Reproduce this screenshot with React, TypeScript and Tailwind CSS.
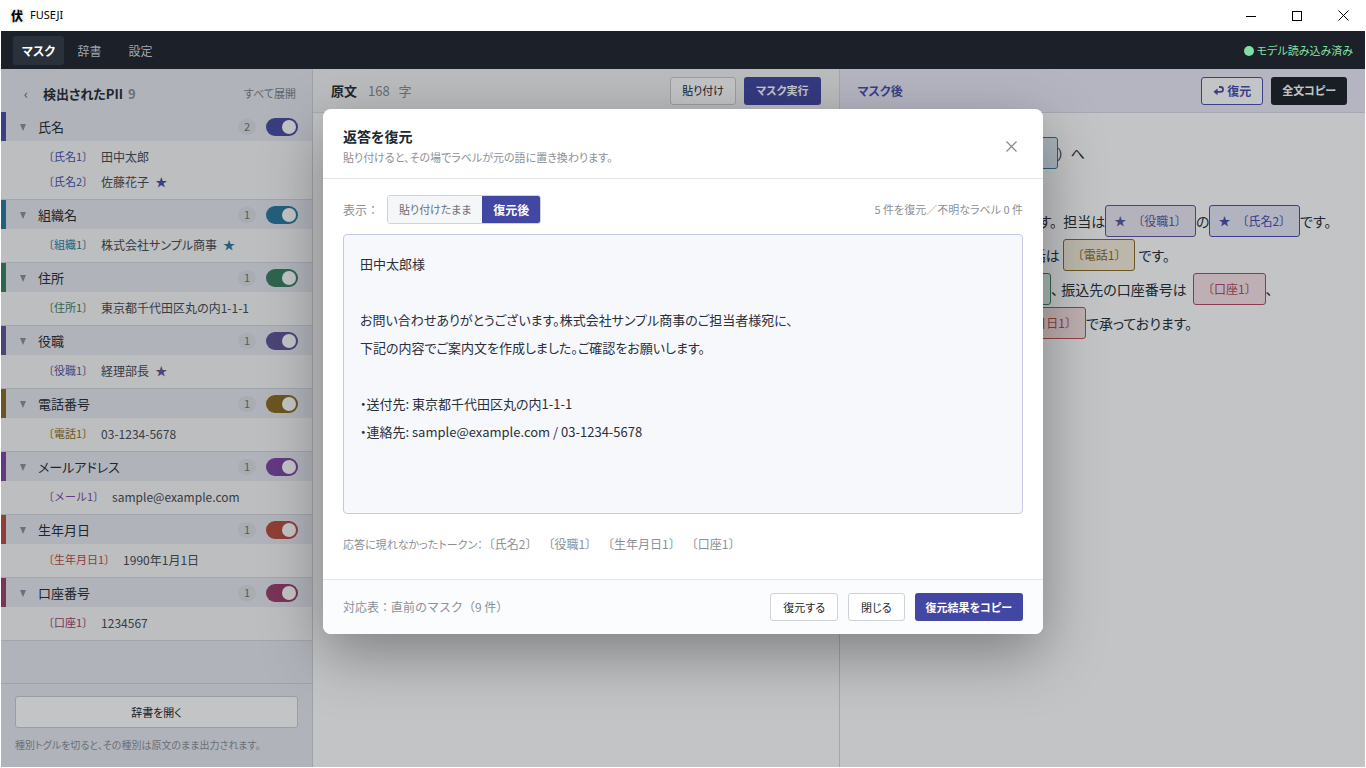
import React, { useState } from 'react';
import clsx from 'clsx';

interface PiiItem {
  tag: string;
  value: string;
  starred?: boolean;
}

interface PiiGroup {
  id: string;
  label: string;
  bar: string;
  toggle: string;
  text: string;
  items: PiiItem[];
}

const groups: PiiGroup[] = [
  {
    id: 'name',
    label: '氏名',
    bar: 'border-[#4a4eae]',
    toggle: 'bg-[#484ca4]',
    text: 'text-[#4a4eae]',
    items: [
      { tag: '〔氏名1〕', value: '田中太郎' },
      { tag: '〔氏名2〕', value: '佐藤花子', starred: true },
    ],
  },
  {
    id: 'org',
    label: '組織名',
    bar: 'border-[#2a7a9e]',
    toggle: 'bg-[#2a7a9e]',
    text: 'text-[#2a7a9e]',
    items: [{ tag: '〔組織1〕', value: '株式会社サンプル商事', starred: true }],
  },
  {
    id: 'address',
    label: '住所',
    bar: 'border-[#388062]',
    toggle: 'bg-[#388062]',
    text: 'text-[#388062]',
    items: [{ tag: '〔住所1〕', value: '東京都千代田区丸の内1-1-1' }],
  },
  {
    id: 'title',
    label: '役職',
    bar: 'border-[#5e549a]',
    toggle: 'bg-[#5e549a]',
    text: 'text-[#5e549a]',
    items: [{ tag: '〔役職1〕', value: '経理部長', starred: true }],
  },
  {
    id: 'phone',
    label: '電話番号',
    bar: 'border-[#8a6c22]',
    toggle: 'bg-[#8a6c22]',
    text: 'text-[#8a6c22]',
    items: [{ tag: '〔電話1〕', value: '03-1234-5678' }],
  },
  {
    id: 'mail',
    label: 'メールアドレス',
    bar: 'border-[#7e46a6]',
    toggle: 'bg-[#7e46a6]',
    text: 'text-[#7e46a6]',
    items: [{ tag: '〔メール1〕', value: 'sample@example.com' }],
  },
  {
    id: 'birthday',
    label: '生年月日',
    bar: 'border-[#b84c42]',
    toggle: 'bg-[#b84c42]',
    text: 'text-[#b84c42]',
    items: [{ tag: '〔生年月日1〕', value: '1990年1月1日' }],
  },
  {
    id: 'account',
    label: '口座番号',
    bar: 'border-[#9c3f6c]',
    toggle: 'bg-[#9c3f6c]',
    text: 'text-[#9c3f6c]',
    items: [{ tag: '〔口座1〕', value: '1234567' }],
  },
];

const restoredText = `田中太郎様

お問い合わせありがとうございます。株式会社サンプル商事のご担当者様宛に、
下記の内容でご案内文を作成しました。ご確認をお願いします。

・送付先: 東京都千代田区丸の内1-1-1
・連絡先: sample@example.com / 03-1234-5678`;

const missingTokens = ['〔氏名2〕', '〔役職1〕', '〔生年月日1〕', '〔口座1〕'];

const TitleBar: React.FC = () => (
  <header className="flex h-[31px] items-center bg-white pl-[10px] text-black">
    <span className="flex h-[14px] w-[14px] items-center justify-center bg-[#f0f0ea] text-[12px] leading-none font-black">伏</span>
    <span className="ml-[6px] font-['Noto_Sans'] text-[11px]">FUSEJI</span>
    <div className="ml-auto flex">
      <button aria-label="最小化" className="flex h-[30px] w-[46px] items-center justify-center">
        <svg width="10" height="10" viewBox="0 0 10 10" stroke="#000" shapeRendering="crispEdges"><path d="M0 5.5h10" /></svg>
      </button>
      <button aria-label="最大化" className="flex h-[30px] w-[46px] items-center justify-center">
        <svg width="10" height="10" viewBox="0 0 10 10" fill="none" stroke="#000" shapeRendering="crispEdges"><path d="M.5.5h9v9h-9z" /></svg>
      </button>
      <button aria-label="閉じる" className="flex h-[30px] w-[46px] items-center justify-center">
        <svg width="11" height="11" viewBox="0 0 11 11" stroke="#000"><path d="M.5.5l10 10M10.5.5l-10 10" /></svg>
      </button>
    </div>
  </header>
);

const NavBar: React.FC = () => (
  <nav className="flex h-[38px] items-center bg-[#1c2028] px-3 pt-px text-[12px] text-[#a2a7b0]">
    <button className="h-[29px] w-[51px] rounded-[3px] bg-[#2b313b] font-bold text-white">マスク</button>
    <button className="h-[29px] w-[51px]">辞書</button>
    <button className="h-[29px] w-[51px]">設定</button>
    <div className="ml-auto flex items-center gap-[3px] text-[11px] text-[#7fe0a5]">
      <span className="h-[10px] w-[10px] rounded-full bg-[#7fe0a5]" />
      モデル読み込み済み
    </div>
  </nav>
);

const GroupSection: React.FC<{ group: PiiGroup }> = ({ group }) => {
  const [enabled, setEnabled] = useState(true);
  return (
    <section className="border-b border-[#d3d6dc]">
      <div className={clsx('flex h-[29px] items-center border-l-[5px] bg-[#e6e8f0] pr-[14px] pl-[13px]', group.bar)}>
        <svg width="8" height="8" viewBox="0 0 8 8" fill="#8b8f98"><path d="M1 1h6L4 8z" /></svg>
        <label htmlFor={`toggle-${group.id}`} className="ml-[11px] text-[13px] text-[#262b36]">{group.label}</label>
        <span className="ml-auto flex h-4 w-[18px] items-center justify-center rounded-full bg-[#dcdfe5] text-[11px] text-[#6d727b]">
          {group.items.length}
        </span>
        <input
          id={`toggle-${group.id}`}
          type="checkbox"
          checked={enabled}
          onChange={() => setEnabled(!enabled)}
          className={clsx(
            "ml-[10px] h-[18px] w-8 appearance-none rounded-full p-[2px] before:block before:h-[14px] before:w-[14px] before:rounded-full before:bg-white before:content-[''] checked:pl-4",
            enabled ? group.toggle : 'bg-gray-400'
          )}
        />
      </div>
      <ul className="bg-[#f6f7f9] pt-[3px] pb-[5px] pl-[42px]">
        {group.items.map((item) => (
          <li key={item.tag} className="flex h-[25px] items-center text-[12px]">
            <span className={clsx('text-[11px] [font-feature-settings:normal]', group.text)}>{item.tag}</span>
            <span className="ml-2 text-[#454a54]">{item.value}</span>
            {item.starred && <span className={clsx('ml-[6px]', group.text)}>★</span>}
          </li>
        ))}
      </ul>
    </section>
  );
};

const Sidebar: React.FC = () => (
  <aside className="flex w-[312px] shrink-0 flex-col border-r border-[#d0d3da] bg-[#e6e8ef]">
    <div className="flex h-[43px] items-center pt-[6px] pr-4 pl-5">
      <button aria-label="折りたたむ" className="w-[10px] text-[13px] text-[#5d626c]">‹</button>
      <h2 className="ml-3 text-[13px] font-bold text-[#262b36]">検出されたPII</h2>
      <span className="ml-[5px] text-[13px] font-bold text-[#8a8f98]">9</span>
      <button className="ml-auto text-[11px] text-[#7c818b]">すべて展開</button>
    </div>
    <div>
      {groups.map((g) => (
        <GroupSection key={g.id} group={g} />
      ))}
    </div>
    <div className="mt-auto border-t border-[#d0d3da] px-[14px] pt-3 pb-[13px]">
      <button className="h-8 w-full rounded-[3px] border border-[#c8ccd3] bg-white text-[11px] text-[#1d222c]">辞書を開く</button>
      <p className="mt-2 text-[10px] leading-[18px] text-[#8a8f98]">種別トグルを切ると、その種別は原文のまま出力されます。</p>
    </div>
  </aside>
);

const SourcePane: React.FC = () => (
  <section className="flex min-w-0 flex-1 flex-col border-r border-[#d6d8dc] bg-white">
    <div className="flex h-[44px] items-center border-b border-[#dfe1e5] bg-[#f3f4f6] px-[18px]">
      <h2 className="text-[13px] font-bold text-[#262b36]">原文</h2>
      <span className="ml-[11px] text-[13px] text-[#878c95]">168&nbsp;&nbsp; 字</span>
      <button className="ml-auto h-7 rounded-[3px] border border-[#c8ccd3] bg-white px-[11px] text-[11px] text-[#1d222c]">貼り付け</button>
      <button className="ml-2 h-7 rounded-[3px] bg-[#4247a3] px-3 text-[11px] font-bold text-white">マスク実行</button>
    </div>
  </section>
);

const Token: React.FC<{ className: string; starred?: boolean; children: React.ReactNode }> = ({ className, starred, children }) => (
  <span className={clsx('inline-flex h-8 shrink-0 items-center gap-[6px] rounded-[3px] border px-2 text-[12px] [font-feature-settings:normal]', className)}>
    {starred && <span>★</span>}
    <span>{children}</span>
  </span>
);

const MaskedPane: React.FC = () => (
  <section className="flex min-w-0 flex-1 flex-col bg-white">
    <div className="flex h-[44px] items-center border-b border-[#d9dae6] bg-[#ebebf8] px-[18px]">
      <h2 className="text-[12px] font-bold text-[#4a4eae]">マスク後</h2>
      <button className="ml-auto flex h-7 items-center gap-[3px] rounded-[3px] border border-[#4a4eae] bg-white px-[11px] text-[12px] font-bold text-[#4a4eae]">
        <svg width="11" height="10" viewBox="0 0 11 10" fill="none" stroke="currentColor" strokeWidth="1.8">
          <path d="M6 1h1.6a2.3 2.3 0 0 1 0 4.8H3" />
          <path d="M4.6 2.4v6.8L.4 5.8z" fill="currentColor" stroke="none" />
        </svg>
        復元
      </button>
      <button className="ml-2 h-7 rounded-[3px] bg-[#1c2028] px-[11px] text-[11px] font-bold text-white">全文コピー</button>
    </div>
    <div className="px-[18px] pt-[23px] text-[14px] whitespace-nowrap text-[#262b36] [&_p]:flex [&_p]:h-[34px] [&_p]:items-center">
      <p>
        <Token className="border-[#4a4eae] bg-[#e8e8fa] text-[#4a4eae]">〔氏名1〕</Token>
        &nbsp;様&nbsp;&nbsp;&nbsp;&nbsp;（
        <Token className="border-[#2a7a9e] bg-[#deebf3] text-[#2a7a9e]" starred>〔組織1〕</Token>
        ）&nbsp; へ
      </p>
      <p />
      <p>
        平素よりお世話になっております。&nbsp;&nbsp;担当は
        <Token className="border-[#5e549a] bg-[#ebe9f5] text-[#5e549a]" starred>〔役職1〕</Token>
        の
        <Token className="border-[#4a4eae] bg-[#e8e8fa] text-[#4a4eae]" starred>〔氏名2〕</Token>
        です。
      </p>
      <p>
        ご連絡先として登録済みの電話は&nbsp;
        <Token className="border-[#8a6c22] bg-[#f6eedb] text-[#8a6c22]">〔電話1〕</Token>
        &nbsp;です。
      </p>
      <p>
        お送り先のご住所は
        <Token className="border-[#388062] bg-[#e0f0e9] text-[#388062]">〔住所1〕</Token>
        、&nbsp;振込先の口座番号は&nbsp;&nbsp;
        <Token className="border-[#b04a62] bg-[#f8e3ea] text-[#b04a62]">〔口座1〕</Token>
        、
      </p>
      <p>
        本人様の生年月日は&nbsp;&nbsp;
        <Token className="border-[#c0504c] bg-[#f9e3e3] text-[#b84c42]">〔生年月日1〕</Token>
        で承っております。
      </p>
    </div>
  </section>
);

const RestoreDialog: React.FC = () => {
  const [text, setText] = useState(restoredText);
  return (
    <div role="dialog" aria-labelledby="restore-title" className="w-[720px] overflow-hidden rounded-lg bg-white shadow-[0_20px_60px_rgba(0,0,0,0.35)]">
      <div className="flex items-center justify-between border-b border-[#e3e5e8] px-5 pt-4 pb-[11px]">
        <div>
          <h1 id="restore-title" className="text-[14px] leading-[22px] font-bold text-[#22262f]">返答を復元</h1>
          <p className="text-[11px] leading-5 text-[#8c9097]">貼り付けると、その場でラベルが元の語に置き換わります。</p>
        </div>
        <button aria-label="閉じる" className="flex h-6 w-6 items-center justify-center">
          <svg width="11" height="11" viewBox="0 0 11 11" stroke="#858a92" strokeWidth="1.2"><path d="M.5.5l10 10M10.5.5l-10 10" /></svg>
        </button>
      </div>
      <div className="px-5 pt-4 pb-[25px] text-[11px] text-[#8c9097]">
        <div className="flex items-center">
          <span className="text-[12px] [font-feature-settings:normal]">表示：</span>
          <div className="ml-2 flex h-[29px] overflow-hidden rounded-[3px] border border-[#d0d3d8]">
            <button className="bg-[#f4f6f7] px-[11px] text-[#6a6f78]">貼り付けたまま</button>
            <button className="bg-[#4247a3] px-[11px] text-[12px] font-bold text-white">復元後</button>
          </div>
          <span className="ml-auto">5 件を復元／不明なラベル 0 件</span>
        </div>
        <textarea
          aria-label="復元結果"
          value={text}
          onChange={(e) => setText(e.target.value)}
          className="mt-[10px] block h-[280px] w-full resize-none rounded border border-[#c6c8e2] bg-[#f6f8fc] px-4 py-[15px] text-[13px] leading-7 text-[#2b2f38] outline-none"
        />
        <div className="mt-5 flex items-center leading-5">
          <span>応答に現れなかったトークン：</span>
          <div className="flex gap-[5px] text-[12px] [font-feature-settings:normal]">
            {missingTokens.map((t) => (
              <span key={t}>{t}</span>
            ))}
          </div>
        </div>
      </div>
      <div className="flex items-center border-t border-[#e3e5e8] bg-[#fafcfd] px-5 py-[13px] text-[11px]">
        <span className="text-[12px] text-[#8c9097] [font-feature-settings:normal]">対応表：直前のマスク（9 件）</span>
        <div className="ml-auto flex gap-[10px]">
          <button className="h-7 rounded-[3px] border border-[#cfd2d7] bg-white px-3 text-[#22262f]">復元する</button>
          <button className="h-7 rounded-[3px] border border-[#cfd2d7] bg-white px-3 text-[#22262f]">閉じる</button>
          <button className="h-7 rounded-[3px] bg-[#4247a3] px-[11px] font-bold text-white">復元結果をコピー</button>
        </div>
      </div>
    </div>
  );
};

export default function App() {
  return (
    <div className="flex h-screen flex-col overflow-hidden bg-white font-['Noto_Sans_CJK_JP',sans-serif] [font-feature-settings:'palt']">
      <TitleBar />
      <div className="mx-px mb-px flex min-h-0 flex-1 flex-col">
        <NavBar />
        <main className="relative flex min-h-0 flex-1 overflow-hidden">
          <Sidebar />
          <SourcePane />
          <MaskedPane />
          <div className="absolute inset-0 flex items-start justify-center bg-[#0f1219]/25 pt-10">
            <RestoreDialog />
          </div>
        </main>
      </div>
    </div>
  );
}
